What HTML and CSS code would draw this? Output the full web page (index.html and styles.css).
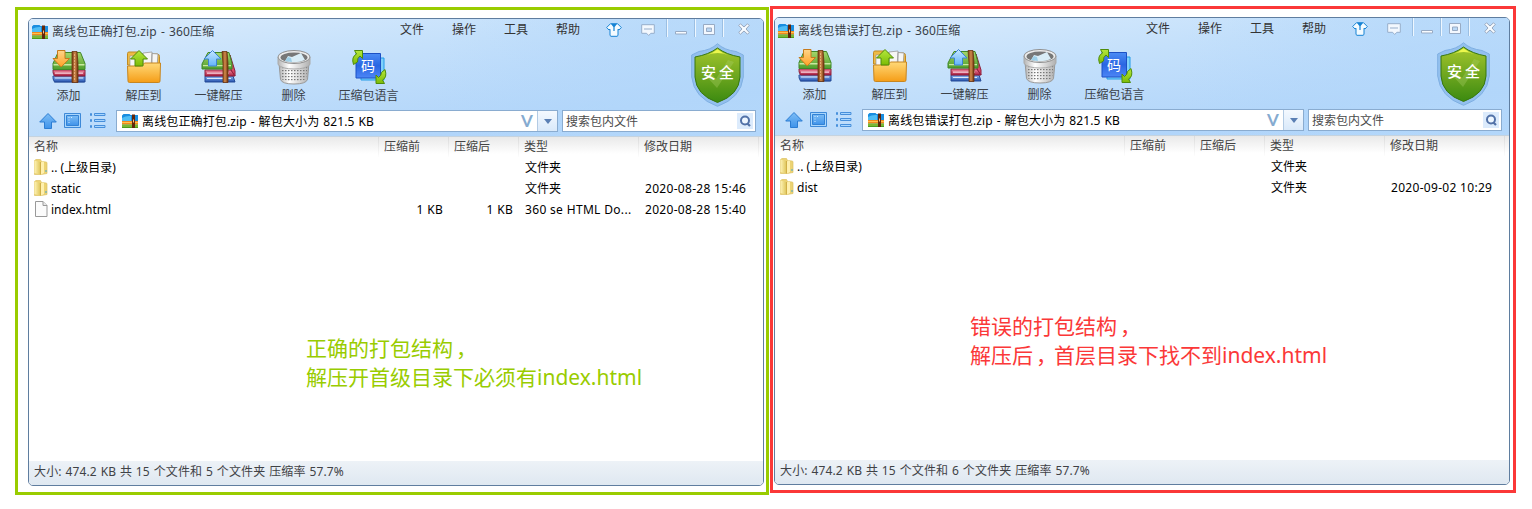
FILE: index.html
```html
<!DOCTYPE html>
<html lang="zh-CN">
<head>
<meta charset="utf-8">
<title>离线包打包结构</title>
<link rel="stylesheet" href="styles.css">
</head>
<body>
<svg class="defs" width="0" height="0">
  <defs>
    <linearGradient id="gGreen" x1="0" y1="0" x2="0" y2="1"><stop offset="0" stop-color="#a6d66b"/><stop offset="1" stop-color="#4f9f2d"/></linearGradient>
    <linearGradient id="gBelt" x1="0" y1="0" x2="1" y2="0"><stop offset="0" stop-color="#7a3c12"/><stop offset=".5" stop-color="#d18a4c"/><stop offset="1" stop-color="#6b310d"/></linearGradient>
    <linearGradient id="gRed" x1="0" y1="0" x2="0" y2="1"><stop offset="0" stop-color="#f28aa0"/><stop offset="1" stop-color="#a81e41"/></linearGradient>
    <linearGradient id="gBlue" x1="0" y1="0" x2="0" y2="1"><stop offset="0" stop-color="#8db9f5"/><stop offset="1" stop-color="#2450ac"/></linearGradient>
    <linearGradient id="gFolder" x1="0" y1="0" x2="0" y2="1"><stop offset="0" stop-color="#ffd978"/><stop offset="1" stop-color="#f59d17"/></linearGradient>
    <linearGradient id="gOr" x1="0" y1="0" x2="0" y2="1"><stop offset="0" stop-color="#ffd58a"/><stop offset="1" stop-color="#ffa124"/></linearGradient>
    <linearGradient id="gLime" x1="0" y1="0" x2="0" y2="1"><stop offset="0" stop-color="#b5e83c"/><stop offset="1" stop-color="#7cbb06"/></linearGradient>
    <linearGradient id="gSky" x1="0" y1="0" x2="0" y2="1"><stop offset="0" stop-color="#c5e6ff"/><stop offset="1" stop-color="#63b4fa"/></linearGradient>
    <linearGradient id="gCode" x1="0" y1="0" x2="0" y2="1"><stop offset="0" stop-color="#4b8cf5"/><stop offset=".5" stop-color="#2a66e2"/><stop offset="1" stop-color="#4c86f6"/></linearGradient>
    <linearGradient id="gShield" x1="0" y1="0" x2="0" y2="1"><stop offset="0" stop-color="#a4c62c"/><stop offset=".5" stop-color="#6fa71f"/><stop offset="1" stop-color="#3b8a10"/></linearGradient>
    <linearGradient id="gTin" x1="0" y1="0" x2="1" y2="0"><stop offset="0" stop-color="#b5b5b5"/><stop offset=".35" stop-color="#fff"/><stop offset="1" stop-color="#b0b0b0"/></linearGradient>
    <linearGradient id="gYel" x1="0" y1="0" x2="1" y2="0"><stop offset="0" stop-color="#fff3b5"/><stop offset="1" stop-color="#e0c860"/></linearGradient>
    <linearGradient id="gNav" x1="0" y1="0" x2="0" y2="1"><stop offset="0" stop-color="#7dbdf5"/><stop offset="1" stop-color="#3f93ea"/></linearGradient>
    <pattern id="mesh" width="3" height="3" patternUnits="userSpaceOnUse"><rect width="1.5" height="1.2" fill="#777"/></pattern>
  </defs>
  <symbol id="books" viewBox="0 0 36 36">
    <path d="M3 30h30v4H3z" fill="#35589b" opacity=".35"/>
    <path d="M2 27h32v6H3.500q-2-3-1.500-6z" fill="url(#gBlue)" stroke="#254b96"/>
    <path d="M4 28.500h28v1H4z" fill="#d9e8fa"/>
    <path d="M2 21h32v6H3.500q-2-3-1.500-6z" fill="url(#gRed)" stroke="#8d1f3b"/>
    <path d="M4 23.500h28v1.300H4z" fill="#f7d3dc"/>
    <path d="M7 3.500h22.500l4.500 11v6H2v-6z" fill="url(#gGreen)" stroke="#3f8728"/>
    <path d="M2.500 15h31v1.500h-31z" fill="#c8e8a0"/>
    <path d="M21 2.500h5l1 12v19h-6v-19z" fill="url(#gBelt)" stroke="#6a3310" stroke-width=".8"/>
    <path d="M23.500 5v27" stroke="#efb987" stroke-width=".8" stroke-dasharray="2 1"/>
  </symbol>
  <symbol id="i-add" viewBox="0 0 36 36"><use href="#books"/><path d="M6.500 1.500h7.500v8h4.500L10.200 18 2 9.500h4.500z" fill="url(#gOr)" stroke="#c67a1d"/></symbol>
  <symbol id="i-one" viewBox="0 0 36 36">
    <path d="M4 27h28l2 6H4z" fill="url(#gBlue)" stroke="#254b96"/>
    <path d="M6 29h24v1H6z" fill="#d9e8fa"/>
    <path d="M4 21h26l4 6H4z" fill="url(#gRed)" stroke="#8d1f3b"/>
    <path d="M6 23.500h22v1.200H6z" fill="#f7d3dc"/>
    <path d="M29 6l5 16v5l-4-6z" fill="#d94766" stroke="#8d1f3b"/>
    <path d="M7 3.500h21l3 11v5.500H1v-5z" fill="url(#gGreen)" stroke="#3f8728"/>
    <path d="M2 16h28v1.300H2z" fill="#c8e8a0"/>
    <path d="M21 2.500h5l1 12v19h-5v-19z" fill="url(#gBelt)" stroke="#6a3310" stroke-width=".8"/>
    <path d="M11.500 1.500l8.500 8.500h-4.500v7h-8v-7H3z" fill="url(#gSky)" stroke="#3d82d0"/>
  </symbol>
  <symbol id="i-extract" viewBox="0 0 36 36">
    <path d="M1.500 10V4.500q0-1.500 1.500-1.500h9l2 2h17q2.500 0 2.500 2.500V16h-32z" fill="#edba45" stroke="#c18a22"/>
    <path d="M4 7h11v13H4z" fill="#f7f7f7" stroke="#999" stroke-width=".7"/>
    <path d="M17 4l9-1v14h-9zM26 4.500l6 .5-1 13h-6z" fill="#f6f6f4" stroke="#999" stroke-width=".8"/>
    <path d="M1.500 17h14l3-3h16l-.5 18q0 1.500-1.500 1.500h-29Q2 33.500 2 32z" fill="url(#gFolder)" stroke="#c78620"/>
    <path d="M13 1.500l8.500 8.500H17v7H9v-7H4.500z" fill="url(#gLime)" stroke="#4f8b0a"/>
  </symbol>
  <symbol id="i-trash" viewBox="0 0 36 36">
    <path d="M3 14l1.500 16.500Q6 35 18 35t13.500-4.500L33 14z" fill="url(#gTin)" stroke="#999"/>
    <path d="M4.500 17q13.500 4 27 0L30 30.500q-12 4-24 0z" fill="url(#mesh)"/>
    <path d="M2 8v7.500q4 4.500 16 4.500t16-4.500V8z" fill="url(#gTin)" stroke="#aaa"/>
    <ellipse cx="18" cy="8" rx="16" ry="6.500" fill="#ededed" stroke="#8f8f8f"/>
    <ellipse cx="18" cy="8.500" rx="13.500" ry="4.900" fill="#777"/>
    <path d="M9 12l3-5 4 1 9-4 4 7q-9 4-20 1z" fill="#d9edf7"/><path d="M9 12l3-4 3 1 1 4z" fill="#9dcfe8"/>
  </symbol>
  <symbol id="i-lang" viewBox="0 0 36 36">
    <path d="M10 9h23v22H10z" fill="#7fd0fb" stroke="#239be8"/>
    <path d="M5 4.500h24.500v24.500H5z" fill="url(#gCode)" stroke="#1c50c4"/>
    <path d="M2.500 15.500Q0 8 5.500 5L3.500 1.500h8v8L9 7Q6 9 6.500 13z" fill="url(#gLime)" stroke="#4f8b0a"/>
    <path d="M34 20.500q2.500 8-2.500 10.500l2 3.500h-8.500v-8.500l2.500 2.500q3-2 3-5z" fill="url(#gLime)" stroke="#4f8b0a"/>
  </symbol>
  <symbol id="i-zip" viewBox="0 0 16 14">
    <path d="M0 1.500L1.500 0h6l1 1H16v6H0z" fill="#1a8ee0"/><path d="M0 4Q4 1.500 9 2v5H0z" fill="#4fbdf5"/>
    <path d="M0 7h16v3.500H0z" fill="#f08a1c"/><path d="M0 8h16v1H0z" fill="#ffc04c"/>
    <path d="M0 10.500h16V14H0z" fill="#4c9c1e"/><path d="M0 11.500h16v1H0z" fill="#a6d24c"/>
    <path d="M10 .5h3V14h-3z" fill="#61270c"/><path d="M11 5.500h1v3h-1z" fill="#f0c08e"/>
  </symbol>
  <symbol id="i-folder" viewBox="0 0 14 16">
    <path d="M.5 1.500L2 .5h4.500l1 2 4.500.5q1 0 1 1v10.500L7 15.500H.5z" fill="#ecd373" stroke="#dcc263" stroke-width=".7"/>
    <path d="M.5 1.500L6 3v12.500L.5 14z" fill="url(#gYel)"/><path d="M7 4q0-1.500 1.500-1.500l1.500.5v11l-3 1.500z" fill="#fff0ae"/>
    <path d="M6.500 3v12.500" stroke="#c9a63c" stroke-width=".8"/><path d="M11.500 11h1v2h-1z" fill="#48a6ce"/>
  </symbol>
  <symbol id="i-file" viewBox="0 0 14 16"><path d="M1.500.5h7.500l4 4v11H1.500z" fill="#fbfbfb" stroke="#999"/><path d="M9 .5v4h4" fill="#e8e8e8" stroke="#999"/></symbol>
  <symbol id="i-up" viewBox="0 0 18 16"><path d="M9 .5L17.300 9H12.500v6.500h-7V9H.7z" fill="url(#gNav)" stroke="#2c7dd3"/></symbol>
  <symbol id="i-view" viewBox="0 0 18 16"><path d="M.5.5h16v14H.5z" fill="#a9d6fc" stroke="#3d89d8"/><path d="M2.500 2.500h12v10h-12z" fill="url(#gNav)" stroke="#3282d5"/><path d="M4.500 4.500h1M7 4.500h1M4.500 7h1M4.500 9.500h1" stroke="#d4ebff"/></symbol>
  <symbol id="i-list" viewBox="0 0 16 16"><path d="M.5.5h1v2h-1zM.5 6.500h1v2h-1zM.5 12.500h1v2h-1zM4.500.5h10.500v2H4.500zM4.500 6.500h10.500v2H4.500zM4.500 12.500h10.500v2H4.500z" fill="#a8d6ff" stroke="#478fdb"/></symbol>
  <symbol id="i-shirt" viewBox="0 0 16 14"><path d="M4.500.7L.7 4.500 3 7l1-.8v6.300l1 .8h6l1-.8V6.200l1 .8 2.300-2.500L11.500.7z" fill="#f4fbff" stroke="#1683d4"/><path d="M5 1h6L8.600 4v4H7.400V4z" fill="#1683d4"/></symbol>
  <symbol id="i-note" viewBox="0 0 14 13"><path d="M.7.7h12.600v8.600H9.800L7.700 11.500 5.600 9.300H.7z" fill="#f3f8fe" stroke="#97aecb"/><path d="M3 5h8" stroke="#97aecb"/></symbol>
  <symbol id="i-min" viewBox="0 0 12 4"><path d="M.5.5h11v2.500H.5z" fill="#f8fbff" stroke="#98abc4"/></symbol>
  <symbol id="i-max" viewBox="0 0 12 11"><path d="M.5.5h11v10H.5z" fill="#f3f8fe" stroke="#98abc4"/><path d="M3.500 4h5v3.500h-5z" fill="#bad8f6" stroke="#98abc4"/></symbol>
  <symbol id="i-close" viewBox="0 0 12 12"><path d="M.8 2.500L2.500.8 6 4 9.500.8l1.700 1.700L8 6l3.200 3.500-1.700 1.700L6 8l-3.500 3.200L.8 9.500 4 6z" fill="#f7fbff" stroke="#98a7bd"/></symbol>
  <symbol id="i-search" viewBox="0 0 16 16"><rect width="16" height="16" fill="#dcebfc"/><circle cx="8" cy="7.500" r="4" fill="#edf6ff" stroke="#5272a8" stroke-width="2"/><path d="M10.500 10.500l2.500 2.500" stroke="#5272a8" stroke-width="2.200"/></symbol>
  <symbol id="i-shield" viewBox="0 0 53 64">
    <path d="M26.500.7Q20 7 8 8.500L.7 12v22Q3 55 26.500 63.300 50 55 52.300 34V12L45 8.500Q33 7 26.500.7z" fill="#93c0ee" stroke="#7fafe2"/>
    <path d="M26.500 5Q18 11.500 4 14v20q1 18 22.500 25.500Q48 52 49 34V14Q35 11.500 26.500 5z" fill="url(#gShield)" stroke="#37770f"/>
    <path d="M26.500 6.300Q22 10 16 12q11-4 21 0-6-2-10.500-5.700z" fill="#ecf74c"/>
    <path d="M15 33l5-3 5 6 12-19 6 2-17 26z" fill="#a9cf68" opacity=".35"/>
  </symbol>
</svg>

<main class="board">
  <section class="frame frame-ok">
    <div class="window">
      <header class="chrome">
        <div class="titlebar">
          <svg class="zip"><use href="#i-zip"/></svg><h1 class="title">离线包正确打包.zip - 360压缩</h1>
          <nav class="menu"><span>文件</span><span>操作</span><span>工具</span><span>帮助</span></nav>
          <svg class="shirt"><use href="#i-shirt"/></svg><svg class="note"><use href="#i-note"/></svg>
          <div class="controls"><b><svg class="min"><use href="#i-min"/></svg></b><b><svg class="max"><use href="#i-max"/></svg></b><b><svg class="close"><use href="#i-close"/></svg></b></div>
        </div>
        <div class="toolbar">
          <div class="tool"><svg><use href="#i-add"/></svg><span>添加</span></div>
          <div class="tool"><svg><use href="#i-extract"/></svg><span>解压到</span></div>
          <div class="tool"><svg><use href="#i-one"/></svg><span>一键解压</span></div>
          <div class="tool"><svg><use href="#i-trash"/></svg><span>删除</span></div>
          <div class="tool"><svg><use href="#i-lang"/></svg><em>码</em><span>压缩包语言</span></div>
          <div class="shield"><svg><use href="#i-shield"/></svg><em>安全</em></div>
        </div>
        <div class="navbar">
          <svg class="nav-up"><use href="#i-up"/></svg><svg class="nav-view"><use href="#i-view"/></svg><svg class="nav-list"><use href="#i-list"/></svg>
          <div class="address"><svg class="zip"><use href="#i-zip"/></svg><span class="path">离线包正确打包.zip - 解包大小为 821.5 KB</span><span class="vee">V</span><span class="drop"></span></div>
          <div class="search"><span>搜索包内文件</span><svg><use href="#i-search"/></svg></div>
        </div>
      </header>
      <div class="list">
        <div class="row head"><span>名称</span><span>压缩前</span><span>压缩后</span><span>类型</span><span>修改日期</span><span></span></div>
        <div class="row"><span class="name"><svg><use href="#i-folder"/></svg>.. (上级目录)</span><span></span><span></span><span>文件夹</span><span></span></div>
        <div class="row"><span class="name"><svg><use href="#i-folder"/></svg>static</span><span></span><span></span><span>文件夹</span><span class="date">2020-08-28 15:46</span></div>
        <div class="row"><span class="name"><svg><use href="#i-file"/></svg>index.html</span><span class="num">1 KB</span><span class="num">1 KB</span><span class="kind">360 se HTML Do...</span><span class="date">2020-08-28 15:40</span></div>
        <p class="remark">正确的打包结构<i>，</i><br>解压开首级目录下必须有index.html</p>
      </div>
      <footer class="status">大小: 474.2 KB 共 15 个文件和 5 个文件夹 压缩率 57.7%</footer>
    </div>
  </section>

  <section class="frame frame-bad">
    <div class="window">
      <header class="chrome">
        <div class="titlebar">
          <svg class="zip"><use href="#i-zip"/></svg><h1 class="title">离线包错误打包.zip - 360压缩</h1>
          <nav class="menu"><span>文件</span><span>操作</span><span>工具</span><span>帮助</span></nav>
          <svg class="shirt"><use href="#i-shirt"/></svg><svg class="note"><use href="#i-note"/></svg>
          <div class="controls"><b><svg class="min"><use href="#i-min"/></svg></b><b><svg class="max"><use href="#i-max"/></svg></b><b><svg class="close"><use href="#i-close"/></svg></b></div>
        </div>
        <div class="toolbar">
          <div class="tool"><svg><use href="#i-add"/></svg><span>添加</span></div>
          <div class="tool"><svg><use href="#i-extract"/></svg><span>解压到</span></div>
          <div class="tool"><svg><use href="#i-one"/></svg><span>一键解压</span></div>
          <div class="tool"><svg><use href="#i-trash"/></svg><span>删除</span></div>
          <div class="tool"><svg><use href="#i-lang"/></svg><em>码</em><span>压缩包语言</span></div>
          <div class="shield"><svg><use href="#i-shield"/></svg><em>安全</em></div>
        </div>
        <div class="navbar">
          <svg class="nav-up"><use href="#i-up"/></svg><svg class="nav-view"><use href="#i-view"/></svg><svg class="nav-list"><use href="#i-list"/></svg>
          <div class="address"><svg class="zip"><use href="#i-zip"/></svg><span class="path">离线包错误打包.zip - 解包大小为 821.5 KB</span><span class="vee">V</span><span class="drop"></span></div>
          <div class="search"><span>搜索包内文件</span><svg><use href="#i-search"/></svg></div>
        </div>
      </header>
      <div class="list">
        <div class="row head"><span>名称</span><span>压缩前</span><span>压缩后</span><span>类型</span><span>修改日期</span><span></span></div>
        <div class="row"><span class="name"><svg><use href="#i-folder"/></svg>.. (上级目录)</span><span></span><span></span><span>文件夹</span><span></span></div>
        <div class="row"><span class="name"><svg><use href="#i-folder"/></svg>dist</span><span></span><span></span><span>文件夹</span><span class="date">2020-09-02 10:29</span></div>
        <p class="remark">错误的打包结构<i>，</i><br>解压后<i>，</i>首层目录下找不到index.html</p>
      </div>
      <footer class="status">大小: 474.2 KB 共 15 个文件和 6 个文件夹 压缩率 57.7%</footer>
    </div>
  </section>
</main>
</body>
</html>
```

FILE: styles.css
```css
* { box-sizing: border-box; }
body { margin: 0; background: #fff; color: #000; font: 12px/20px "Noto Sans", "Noto Sans CJK SC", sans-serif; }
svg { display: block; flex: none; }
em { font-style: normal; }
.defs { position: absolute; }
.board { display: flex; align-items: flex-start; gap: 1px; padding: 6px 0 0 15px; white-space: nowrap; }
.frame { flex: none; border: 3px solid; }
.frame-ok { width: 754px; height: 488px; margin-top: 1px; padding: 8px 0 0 10px; border-color: #9c0; }
.frame-bad { width: 746px; height: 487px; padding: 8px 0 0 1px; border-color: #fb3838; }
.window { display: flex; flex-direction: column; width: 736px; height: 468px; border: 1px solid #5f7d9f; border-radius: 5px; overflow: hidden; background: #fff; }

.chrome { height: 117px; background: linear-gradient(100deg, #acd3f800 55%, #b3d7fa99 85%), linear-gradient(172deg, #dcedfd, #c4e0fb 38%, #b1d5fa 78%, #b3d7fb); }
.titlebar { display: flex; height: 24px; padding-left: 3px; }
.zip { width: 16px; height: 14px; }
.titlebar .zip { margin-top: 6px; }
.title { width: 352px; margin: 3px 0 0 4px; font-size: 12px; font-weight: 400; color: #383f48; letter-spacing: .12px; word-spacing: 1px; }
.menu { display: flex; gap: 28px; width: 206px; margin: 1px 0 0 -4px; color: #333; }
.shirt { width: 16px; height: 14px; margin-top: 4px; }
.note { width: 14px; height: 13px; margin: 5px 0 0 19px; }
.controls { display: flex; margin-left: 12px; }
.controls b { display: block; width: 28px; height: 18px; padding: 5px 0 0 7px; border-left: 1px solid #eef7ff; box-shadow: -1px 0 #9bbfe3; }
.controls b:first-child { padding-top: 12px; }
.controls b:last-child { width: 40px; padding: 4px 0 0 14px; }
.min { width: 12px; height: 4px; }
.max { width: 12px; height: 11px; }
.close { width: 12px; height: 12px; }

.toolbar { display: flex; height: 67px; padding-left: 2px; }
.tool { position: relative; display: flex; flex-direction: column; align-items: center; width: 75px; padding-top: 6px; color: #3b4148; }
.tool svg { width: 36px; height: 36px; }
.tool span { line-height: 22px; }
/* characters lettered on the icons */
.tool em { position: absolute; left: 30px; top: 12px; color: #fff; font: 14px/20px "Noto Sans CJK SC", sans-serif; }
.shield { position: relative; width: 53px; height: 64px; margin-left: 285px; }
.shield svg { width: 53px; height: 64px; }
.shield em { position: absolute; left: 10px; top: 19px; color: #fff; font: 500 15px/20px "Noto Sans CJK SC", sans-serif; letter-spacing: 3px; }

.navbar { display: flex; height: 22px; padding-left: 10px; }
.nav-up { width: 18px; height: 16px; margin-top: 3px; }
.nav-view { width: 18px; height: 16px; margin: 3px 0 0 7px; }
.nav-list { width: 16px; height: 16px; margin: 3px 0 0 8px; }
.address { display: flex; width: 442px; margin-left: 10px; border: 1px solid #8aacd0; background: #fff; }
.address .zip { margin: 3px 0 0 5px; }
.path { width: 383px; padding-left: 4px; line-height: 22px; letter-spacing: .14px; word-spacing: .6px; }
.vee { width: 15px; color: #86abd0; font: 700 17px/20px Lato, sans-serif; }
.drop { display: flex; width: 20px; margin-left: 1px; justify-content: center; align-items: center; border-left: 1px solid #b3cbe4; background: linear-gradient(#f4f9ff, #d9e9fa); }
.drop::before { content: ""; border: 4.5px solid transparent; border-top: 5px solid #5a7fb4; border-bottom: 0; }
.search { display: flex; justify-content: space-between; width: 194px; margin-left: 4px; padding: 0 2px 0 3px; border: 1px solid #8aacd0; background: #fff; color: #4b4b4b; line-height: 22px; }
.search svg { width: 16px; height: 16px; margin-top: 2px; }

.list { position: relative; flex: 1; }
.row { display: grid; grid-template-columns: 350px 70px 70px 120px 120px 1fr; height: 21px; line-height: 21px; }
.row > :nth-child(n+4) { padding-left: 6px; }
.head { background: linear-gradient(#e9e9e9, #fff 85%); color: #444; line-height: 19px; border-top: 1px solid #c5d3df; }
.row.head > span { padding-left: 5px; border-right: 1px solid; border-image: linear-gradient(#d8d8d8, #fff) 1; }
.row.head > :last-child { border: 0; }
.name { display: flex; gap: 3px; padding-left: 5px; }
.name svg { width: 14px; height: 16px; margin-top: 2px; }
.num { padding-right: 6px; text-align: right; letter-spacing: .3px; }
.kind { letter-spacing: .33px; }
.date { letter-spacing: .3px; }
.remark { position: absolute; margin: 0; font-size: 21px; line-height: 29px; }
.remark i { display: inline-block; width: 21px; text-indent: 3px; font-style: normal; }
.frame-ok .remark { left: 277px; top: 198px; color: #9c0; }
.frame-bad .remark { left: 195px; top: 177px; color: #fb3838; }
.status { height: 24px; padding-left: 5px; line-height: 21px; color: #3f4246; background: linear-gradient(#edf2f7, #dfe8f1); letter-spacing: .15px; word-spacing: .5px; }
```
